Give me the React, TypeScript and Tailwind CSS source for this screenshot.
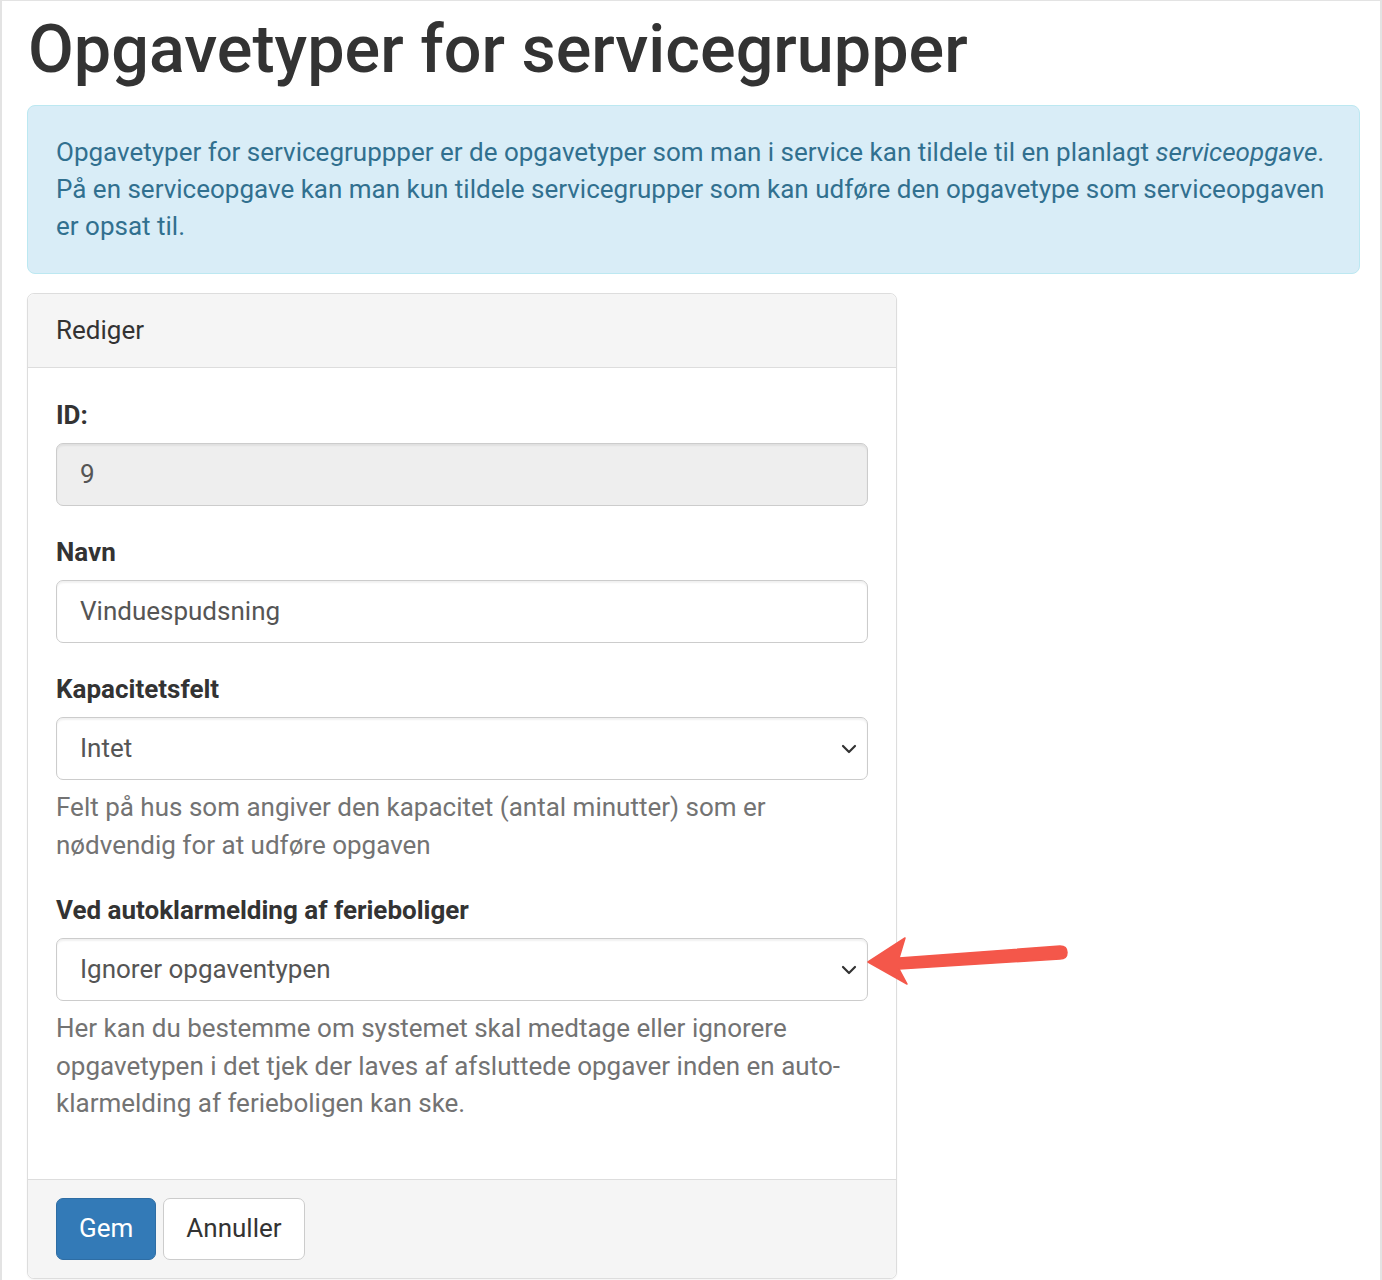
import React from "react";

const ChevronDown = () => (
  <svg width="16" height="10" viewBox="0 0 16 10" fill="none" className="absolute right-[10px] top-1/2 -translate-y-1/2">
    <path d="M2 2l6 6 6-6" stroke="#333" strokeWidth="2.2" strokeLinecap="round" strokeLinejoin="round" />
  </svg>
);

const Field = ({ label, children, help }: { label: string; children: React.ReactNode; help?: React.ReactNode }) => (
  <div className="mb-[28px]">
    <label className="block mb-[9px] font-bold text-[#333] leading-[37px]">{label}</label>
    {children}
    {help && <p className="mt-[9px] text-[#737373] leading-[37.5px]">{help}</p>}
  </div>
);

const inputCls =
  "h-[63px] w-full rounded-[7px] border border-[#ccc] px-[23px] text-[26px] text-[#555] flex items-center shadow-[inset_0_2px_2px_rgba(0,0,0,0.06)]";

const SelectBox = ({ value }: { value: string }) => (
  <div className={inputCls + " relative bg-white"}>
    <span>{value}</span>
    <ChevronDown />
  </div>
);

const RedArrow = () => (
  <svg
    className="absolute left-[862px] top-[930px]"
    width="210"
    height="60"
    viewBox="862 930 210 60"
  >
    <path
      d="M866 961 L903 937 L897 957 L1058 945 Q1065 945 1065 951.5 Q1065 958 1058 958 L897 968 L905 983 Z"
      fill="#f4574a"
      stroke="#f4574a"
      strokeWidth="1.5"
      strokeLinejoin="round"
    />
  </svg>
);

export default function App() {
  return (
    <div className="relative h-[1280px] w-[1382px] overflow-hidden border-l-2 border-r-2 border-t border-[#e3e3e3] bg-white pl-[25px] pr-[20px] pt-[11px] text-[26px] font-['Roboto',sans-serif] text-[#333] leading-[37px]">
      <h1 className="ml-[1px] text-[66.5px] font-medium leading-[75px] mb-[18px]">Opgavetyper for servicegrupper</h1>

      <div className="rounded-[8px] border border-[#bce8f1] bg-[#d9edf7] px-[28px] py-[28px] text-[#31708f] leading-[37px] mb-[19px]">
        Opgavetyper for servicegruppper er de opgavetyper som man i service kan tildele til en planlagt <em>serviceopgave</em>. På en serviceopgave kan man kun tildele servicegrupper som kan udføre den opgavetype som serviceopgaven er opsat til.
      </div>

      <div className="w-[870px] rounded-[7px] border border-[#ddd] bg-white shadow-[0_1px_2px_rgba(0,0,0,0.05)]">
        <div className="rounded-t-[7px] border-b border-[#ddd] bg-[#f5f5f5] px-[28px] py-[18px]">Rediger</div>
        <div className="px-[28px] pt-[29px] pb-[28px]">
          <Field label="ID:">
            <div className={inputCls + " bg-[#eee]"}>9</div>
          </Field>
          <Field label="Navn">
            <div className={inputCls + " bg-white"}>Vinduespudsning</div>
          </Field>
          <Field label="Kapacitetsfelt" help="Felt på hus som angiver den kapacitet (antal minutter) som er nødvendig for at udføre opgaven">
            <SelectBox value="Intet" />
          </Field>
          <Field
            label="Ved autoklarmelding af ferieboliger"
            help="Her kan du bestemme om systemet skal medtage eller ignorere opgavetypen i det tjek der laves af afsluttede opgaver inden en auto-klarmelding af ferieboligen kan ske."
          >
            <SelectBox value="Ignorer opgaventypen" />
          </Field>
        </div>
        <div className="flex gap-[7px] rounded-b-[7px] border-t border-[#ddd] bg-[#f5f5f5] px-[28px] py-[18px]">
          <button className="h-[62px] rounded-[7px] border border-[#2e6da4] bg-[#337ab7] px-[22px] text-white">Gem</button>
          <button className="h-[62px] rounded-[7px] border border-[#ccc] bg-white px-[22px] text-[#333]">Annuller</button>
        </div>
      </div>

      <RedArrow />
    </div>
  );
}
